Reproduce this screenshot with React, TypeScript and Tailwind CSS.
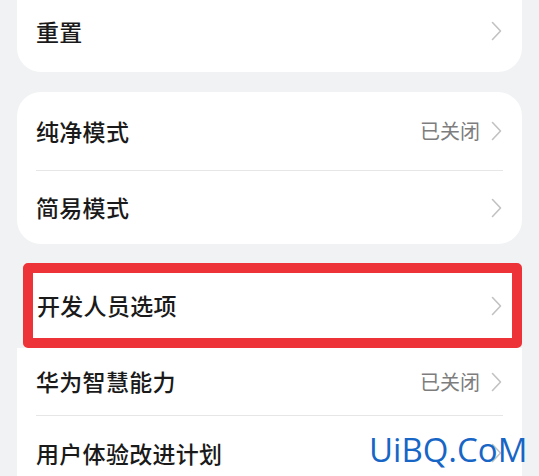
import React from "react";

const Chevron = () => (
  <svg width="11" height="20" viewBox="0 0 11 20" fill="none" className="shrink-0">
    <path d="M1.5 1.5 L9.5 10 L1.5 18.5" stroke="#c2c2c2" strokeWidth="1.6" strokeLinecap="round" strokeLinejoin="round" />
  </svg>
);

const Row = ({ title, value, h }: { title: string; value?: string; h: string }) => (
  <div className={`flex items-center justify-between ${h}`}>
    <span className="text-[23px] font-medium text-[#1a1a1a] leading-none tracking-[0.3px]">{title}</span>
    <div className="flex items-center gap-[11px]">
      {value && <span className="text-[20px] text-[#7d7d7d] leading-none">{value}</span>}
      <Chevron />
    </div>
  </div>
);

export default function App() {
  return (
    <div className="relative w-[539px] h-[476px] overflow-hidden bg-[#f1f2f4] font-['Noto_Sans_CJK_SC',sans-serif]">
      <div className="mx-[17px] h-[72px] bg-white rounded-b-[24px] pl-[19px] pr-[20px] pb-[10px] flex flex-col justify-center">
        <Row title="重置" h="h-[40px]" />
      </div>

      <div className="mx-[17px] mt-[20px] bg-white rounded-[24px] pl-[19px] pr-[20px]">
        <Row title="纯净模式" value="已关闭" h="h-[78px]" />
        <div className="h-px bg-[#e6e6e6] -mr-px" />
        <Row title="简易模式" h="h-[73px]" />
      </div>

      <div className="ml-[23px] mr-[17px] mt-[19px] h-[85px] border-[10px] border-[#ee3338] rounded-[5px] bg-white pl-[4px] pr-[10px] flex flex-col justify-center">
        <Row title="开发人员选项" h="h-[40px]" />
      </div>

      <div className="mx-[17px] bg-white pl-[19px] pr-[20px]">
        <Row title="华为智慧能力" value="已关闭" h="h-[67px]" />
        <div className="h-px bg-[#e6e6e6] -mr-px" />
        <Row title="用户体验改进计划" h="h-[74px]" />
      </div>

      <div className="absolute left-[369px] top-[433px] text-[33px] leading-none text-[#1766c6] font-['Open_Sans',sans-serif]">
        UiBQ.CoM
      </div>
    </div>
  );
}
